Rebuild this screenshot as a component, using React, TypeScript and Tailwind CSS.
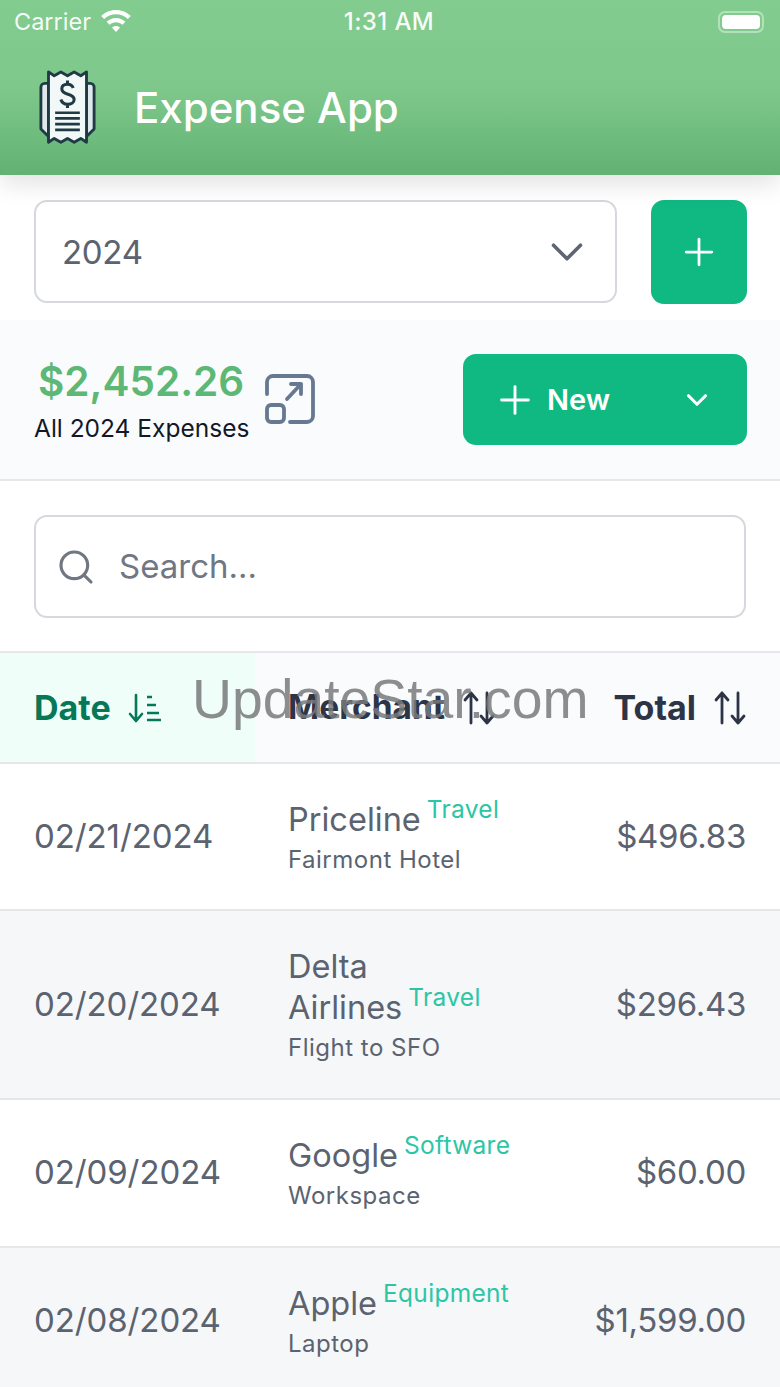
import { ChevronDown, Plus, Search } from "lucide-react";

const font = { fontFamily: "Inter, sans-serif" };

const expenses = [
  { date: "02/21/2024", merchant: ["Priceline"], category: "Travel", note: "Fairmont Hotel", total: "$496.83", height: "h-[147px]" },
  { date: "02/20/2024", merchant: ["Delta", "Airlines"], category: "Travel", note: "Flight to SFO", total: "$296.43", height: "h-[189px]" },
  { date: "02/09/2024", merchant: ["Google"], category: "Software", note: "Workspace", total: "$60.00", height: "h-[148px]" },
  { date: "02/08/2024", merchant: ["Apple"], category: "Equipment", note: "Laptop", total: "$1,599.00", height: "h-[148px] shrink-0" },
];

function ReceiptLogo() {
  return (
    <svg width="57" height="78" viewBox="0 0 60 80" fill="none" stroke="#1f3a44" strokeWidth="3" strokeLinejoin="round">
      <path d="M10 14H6a4 4 0 0 0-4 4v44l8 8zM50 14h4a4 4 0 0 1 4 4v44l-8 8z" fill="#dfe9ec" />
      <path d="M10 2l6 4 7-4 7 4 7-4 7 4 6-4v74l-6-4-7 4-7-4-7 4-7-4-6 4z" fill="#f2f7f8" />
      <path d="M36 19c-1-3-3-4-6-4-4 0-6 2-6 5 0 7 13 4 13 11 0 3-3 5-7 5-3 0-6-2-7-5M30 11v4M30 36v4" strokeWidth="3.200" strokeLinejoin="miter" />
      <path d="M17 45h26M17 51h26M17 57h26M17 63h26" strokeWidth="2.800" />
    </svg>
  );
}

function SortIcon() {
  return (
    <svg width="32" height="34" viewBox="0 0 32 34" fill="none" stroke="#2d3446" strokeWidth="2.800" strokeLinecap="round" strokeLinejoin="round">
      <path d="M8 32V2M2 9l6-7 6 7" />
      <path d="M24 2v30M18 25l6 7 6-7" />
    </svg>
  );
}

export default function App() {
  return (
    <div style={font} className="relative h-[1387px] w-[780px] overflow-hidden bg-white">
      <header className="relative z-10 h-[175px] bg-gradient-to-b from-[#83cc90] via-[#7fc88c] to-[#62b274] shadow-[0_8px_24px_rgba(0,0,0,0.12)]">
        <div className="flex h-[44px] items-center justify-between pl-[14px] pr-[16px] text-white">
          <div className="flex w-[200px] items-center gap-[9px] text-[23.5px] leading-none text-white/95">
            Carrier
            <svg width="32" height="24" viewBox="0 0 32 24" fill="white" className="-mt-[2px]">
              <path d="M16 1c5.800 0 11 2.300 14.800 6l-3 3.100C24.800 7.100 20.600 5.300 16 5.300S7.200 7.100 4.200 10.100l-3-3.100C5 3.300 10.200 1 16 1z" />
              <path d="M16 9c3.600 0 6.900 1.400 9.400 3.700l-3 3.100c-1.700-1.500-3.900-2.500-6.400-2.500s-4.700 1-6.400 2.500l-3-3.100C9.100 10.400 12.400 9 16 9z" />
              <path d="M16 17c1.600 0 3 .6 4.100 1.600L16 23l-4.100-4.400c1.100-1 2.500-1.600 4.100-1.600z" />
            </svg>
          </div>
          <div className="text-[24px] font-medium leading-none tracking-[0.4px] text-white/95">1:31 AM</div>
          <div className="flex w-[200px] items-center justify-end">
            <div className="h-[22px] w-[46px] rounded-[7px] border-2 border-white/40 p-[2px]">
              <div className="h-full w-full rounded-[4px] bg-white" />
            </div>
          </div>
        </div>
        <div className="flex items-center gap-[38px] pl-[39px] pt-[25px]">
          <ReceiptLogo />
          <h1 className="text-[42px] font-medium leading-none text-white">Expense App</h1>
        </div>
      </header>

      <section className="flex h-[145px] gap-[34px] pl-[34px] pr-[33px] pt-[25px]">
        <div className="flex h-[103px] flex-1 items-center justify-between rounded-[13px] border-2 border-[#d5d8dd] bg-white pl-[26px] pr-[21px]">
          <span className="pt-[2px] text-[33px] tracking-[-0.3px] text-[#5b6370]">2024</span>
          <ChevronDown size={54} strokeWidth={1.6} className="text-[#5f6672]" />
        </div>
        <button type="button" className="flex h-[104px] w-[96px] items-center justify-center rounded-[13px] bg-[#10b981]">
          <Plus size={44} strokeWidth={1.5} className="text-white" />
        </button>
      </section>

      <section className="flex h-[161px] items-start justify-between border-b-2 border-[#e5e7eb] bg-[#fafbfd] pl-[34px] pr-[33px] pt-[34px]">
        <div className="flex items-center gap-[15px] pt-[3px]">
          <div>
            <div className="pl-[4px] text-[40.500px] font-semibold leading-[50px] text-[#5cb874]">$2,452.26</div>
            <div className="mt-[6px] text-[24.5px] leading-[30px] text-[#111827]">All 2024 Expenses</div>
          </div>
          <svg width="52" height="52" viewBox="0 0 52 52" fill="none" stroke="#667892" strokeWidth="3.800" strokeLinecap="round" strokeLinejoin="round" className="-mt-[3px]">
            <path d="M3 21V9a6 6 0 0 1 6-6h34a6 6 0 0 1 6 6v34a6 6 0 0 1-6 6H26" />
            <rect x="3" y="32" width="17" height="17" rx="4" />
            <path d="M23 26l14-15M27 11h10v10" />
          </svg>
        </div>
        <button type="button" className="flex h-[91px] w-[284px] items-center rounded-[13px] bg-[#10b981] pl-[29px] pr-[33px] text-white">
          <Plus size={46} strokeWidth={1.5} />
          <span className="ml-[9px] flex-1 text-left text-[29px] font-semibold">New</span>
          <ChevronDown size={34} strokeWidth={2.2} />
        </button>
      </section>

      <section className="h-[172px] border-b-2 border-[#e5e7eb] bg-white px-[34px] pt-[34px]">
        <div className="flex h-[103px] items-center rounded-[13px] border-2 border-[#d5d8dd] bg-white pl-[20px] text-[33px] text-[#717782]">
          <Search size={40} strokeWidth={1.9} className="text-[#717782]" />
          <span className="ml-[23px]">Search...</span>
        </div>
      </section>

      <div className="grid h-[111px] grid-cols-[255px_1fr_auto] items-center border-b-2 border-[#e5e7eb] bg-[#fafbfd] pr-[34px] font-bold text-[#2d3446]">
        <div className="flex h-full items-center gap-[17px] bg-[#effef9] pl-[34px] text-[34px] text-[#047857]">
          Date
          <svg width="34" height="30" viewBox="0 0 34 30" fill="none" stroke="#047857" strokeWidth="2.600" strokeLinecap="round" strokeLinejoin="round">
            <path d="M8 2v26M2 21l6 7 6-7" />
            <path d="M19 4h5M19 12h9M19 20h12M19 27h14" strokeLinecap="butt" />
          </svg>
        </div>
        <div className="flex items-center gap-[18px] pl-[33px] text-[33.5px]">
          Merchant
          <SortIcon />
        </div>
        <div className="flex items-center gap-[18px] text-[34px]">
          Total
          <SortIcon />
        </div>
      </div>

      {expenses.map((row, index) => (
        <div
          key={row.date}
          className={`grid grid-cols-[255px_1fr_auto] items-center border-b-2 border-[#e5e7eb] pr-[34px] ${row.height} ${index % 2 === 1 ? "bg-[#f6f7f9]" : "bg-white"}`}
        >
          <div className="pl-[34px] text-[33px] tracking-[-0.1px] text-[#5b6370]">{row.date}</div>
          <div className="pl-[33px]">
            <div className="text-[32.5px] leading-[41px] text-[#5b6370]">
              {row.merchant.map((word, i) => (
                <div key={word}>
                  {word}
                  {i === row.merchant.length - 1 && (
                    <span className="relative -top-[13px] ml-[6px] text-[24.5px] tracking-[0.3px] text-[#2cc6a6]">{row.category}</span>
                  )}
                </div>
              ))}
            </div>
            <div className="mt-[2px] text-[24px] leading-[30px] tracking-[0.5px] text-[#5b6370]">{row.note}</div>
          </div>
          <div className="text-[33px] tracking-[-0.3px] text-[#5b6370]">{row.total}</div>
        </div>
      ))}

      <div style={{ fontFamily: "'Liberation Sans', sans-serif" }} className="pointer-events-none absolute left-[192px] top-[666px] text-[55.300px] font-light leading-[66px] text-[#77797a]/85">
        UpdateStar.com
      </div>
    </div>
  );
}
